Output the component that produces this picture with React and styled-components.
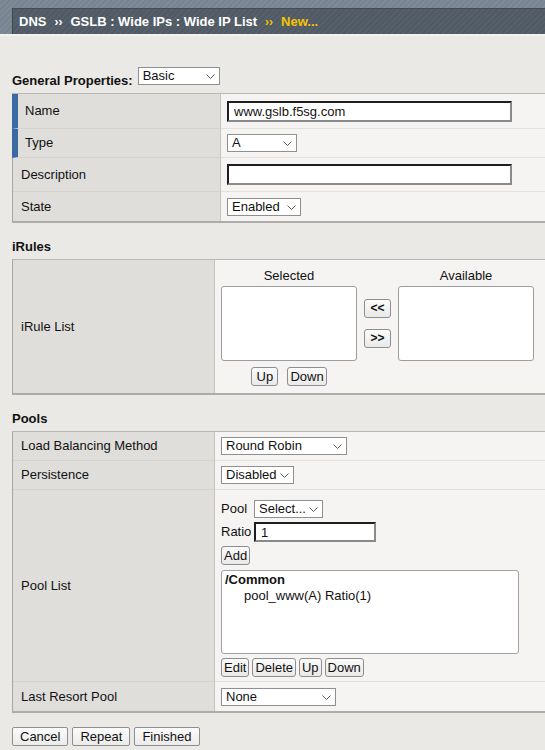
import React from "react"
import styled, { createGlobalStyle } from "styled-components"

const GlobalStyle = createGlobalStyle`
  * {
    box-sizing: border-box;
  }

  body {
    margin: 0;
    background: #eae9e5;
    font-family: "Liberation Sans", Arial, sans-serif;
    font-size: 13px;
    color: #111;
  }
`

const Chevron = () => (
  <svg width="9" height="5" viewBox="0 0 9 5">
    <polyline
      points="0.5,0.5 4.5,4.5 8.5,0.5"
      fill="none"
      stroke="#5a5a5a"
      strokeWidth="1"
    />
  </svg>
)

const Select = ({ w, children }) => (
  <SelectBox $w={w}>
    <span>{children}</span>
    <Chevron />
  </SelectBox>
)

const App = () => {
  return (
    <>
      <GlobalStyle />
      <Header>
        <Crumbs>
          <span>DNS</span>
          <Sep>››</Sep>
          <span>GSLB : Wide IPs : Wide IP List</span>
          <Sep $current>››</Sep>
          <Current>New...</Current>
        </Crumbs>
      </Header>

      <Form>
        <PropsLine>
          <PropsTitle>General Properties:</PropsTitle>
          <Select w={82}>Basic</Select>
        </PropsLine>

        <Table>
          <Row $h={35} $labelW={208}>
            <Label $required>Name</Label>
            <Value>
              <TextInput $w={285} defaultValue="www.gslb.f5sg.com" />
            </Value>
          </Row>
          <Row $h={29} $labelW={208}>
            <Label $required>Type</Label>
            <Value>
              <Select w={70}>A</Select>
            </Value>
          </Row>
          <Row $h={34} $labelW={208}>
            <Label>Description</Label>
            <Value>
              <TextInput $w={285} defaultValue="" />
            </Value>
          </Row>
          <Row $h={29} $labelW={208}>
            <Label>State</Label>
            <Value>
              <Select w={74}>Enabled</Select>
            </Value>
          </Row>
        </Table>

        <SectionTitle>iRules</SectionTitle>
        <Table>
          <Row $h={133} $labelW={202}>
            <Label>iRule List</Label>
            <Value $top={8}>
              <Swap>
                <ColHead>Selected</ColHead>
                <span />
                <ColHead>Available</ColHead>
                <ListBox />
                <ArrowCol>
                  <Button $w={27}>&lt;&lt;</Button>
                  <Button $w={27}>&gt;&gt;</Button>
                </ArrowCol>
                <ListBox />
                <OrderRow>
                  <Button $w={27}>Up</Button>
                  <Button>Down</Button>
                </OrderRow>
              </Swap>
            </Value>
          </Row>
        </Table>

        <SectionTitle>Pools</SectionTitle>
        <Table>
          <Row $h={29} $labelW={202}>
            <Label>Load Balancing Method</Label>
            <Value>
              <Select w={126}>Round Robin</Select>
            </Value>
          </Row>
          <Row $h={29} $labelW={202}>
            <Label>Persistence</Label>
            <Value>
              <Select w={73}>Disabled</Select>
            </Value>
          </Row>
          <Row $h={192} $labelW={202}>
            <Label>Pool List</Label>
            <Value $top={10}>
              <PoolForm>
                <PoolField>
                  <span>Pool</span>
                  <Select w={69}>Select...</Select>
                </PoolField>
                <PoolField>
                  <span>Ratio</span>
                  <TextInput $w={122} $h={20} defaultValue="1" />
                </PoolField>
                <div>
                  <Button>Add</Button>
                </div>
                <PoolBox>
                  <PoolGroup>/Common</PoolGroup>
                  <PoolItem>pool_www(A) Ratio(1)</PoolItem>
                </PoolBox>
                <ButtonRow>
                  <Button>Edit</Button>
                  <Button>Delete</Button>
                  <Button>Up</Button>
                  <Button>Down</Button>
                </ButtonRow>
              </PoolForm>
            </Value>
          </Row>
          <Row $h={29} $labelW={202}>
            <Label>Last Resort Pool</Label>
            <Value>
              <Select w={115}>None</Select>
            </Value>
          </Row>
        </Table>

        <Actions>
          <ActionButton>Cancel</ActionButton>
          <ActionButton>Repeat</ActionButton>
          <ActionButton>Finished</ActionButton>
        </Actions>
      </Form>
    </>
  )
}

const Header = styled.header`
  height: 36px;
  padding: 8px 0 0 12px;
  background: repeating-linear-gradient(
    135deg,
    #7e8a98 0 2px,
    #77838f 2px 4px
  );
  border-bottom: 2px solid #f4f3ef;
`

const Crumbs = styled.nav`
  display: flex;
  align-items: center;
  height: 26px;
  padding-left: 6px;
  background: repeating-linear-gradient(
    135deg,
    #56606b 0 2px,
    #505a65 2px 4px
  );
  border-top: 1px solid #434b55;
  border-left: 1px solid #3e464f;
  color: #fff;
  font-weight: bold;
  font-size: 13px;
`

const Sep = styled.span`
  margin: 0 8px;
  color: ${(p) => (p.$current ? "#f5c400" : "#fff")};
  font-size: 12px;
`

const Current = styled.span`
  color: #f5c400;
`

const Form = styled.main`
  padding: 31px 0 0 12px;
`

const PropsLine = styled.div`
  display: flex;
  align-items: flex-start;
  gap: 5px;
  margin-bottom: 4px;
`

const PropsTitle = styled.span`
  margin-top: 6px;
  font-weight: bold;
  line-height: 16px;
`

const SectionTitle = styled.h3`
  margin: 16px 0 4px;
  font-size: 13px;
  line-height: 16px;
  font-weight: bold;
`

const Table = styled.section`
  border-top: 1px solid #b9b8b5;
  border-bottom: 2px solid #adacaa;
  border-left: 1px solid #a8a7a4;
`

const Row = styled.div`
  display: grid;
  grid-template-columns: ${(p) => p.$labelW}px 1fr;
  height: ${(p) => p.$h}px;

  & > * {
    border-bottom: 1px solid #d4d3d0;
  }

  &:last-child > * {
    border-bottom: none;
  }
`

const Label = styled.div`
  display: flex;
  align-items: center;
  padding-left: ${(p) => (p.$required ? 7 : 8)}px;
  background: #dfdedb;
  border-right: 1px solid #c5c4c1;
  border-left: ${(p) => (p.$required ? "6px solid #3b69a1" : "none")};
  margin-left: ${(p) => (p.$required ? "-1px" : "0")};
  line-height: 16px;
`

const Value = styled.div`
  display: flex;
  align-items: ${(p) => (p.$top ? "flex-start" : "center")};
  padding: ${(p) => p.$top || 0}px 6px 0;
  background: #f5f4f2;
  border-bottom-color: #e2e1de !important;
`

const SelectBox = styled.div`
  display: inline-flex;
  align-items: center;
  justify-content: space-between;
  gap: 3px;
  width: ${(p) => p.$w}px;
  height: 18px;
  padding: 0 4px 0 4px;
  background: #fff;
  border: 1px solid #8f8f8f;
  font-size: 13px;
  line-height: 16px;
  color: #111;
  white-space: nowrap;

  svg {
    flex: none;
    margin-top: 1px;
  }
`

const TextInput = styled.input.attrs({ type: "text" })`
  width: ${(p) => p.$w}px;
  height: ${(p) => p.$h || 21}px;
  padding: 0 5px;
  border: 2px solid;
  border-color: #1e1e1e #8a8a8a #8a8a8a #1e1e1e;
  background: #fff;
  font-family: "Liberation Sans", Arial, sans-serif;
  font-size: 13px;
  color: #111;
  outline: none;
`

const Button = styled.button`
  height: 19px;
  min-width: ${(p) => (p.$w ? `${p.$w}px` : "0")};
  padding: 0 2px;
  border: 1px solid #8e8e8e;
  border-radius: 3px;
  background: linear-gradient(#fbfbfb, #e9e9e9);
  font-family: "Liberation Sans", Arial, sans-serif;
  font-size: 13px;
  line-height: 17px;
  color: #111;
`

const Swap = styled.div`
  display: grid;
  grid-template-columns: 136px 27px 136px;
  column-gap: 7px;
  row-gap: 2px;
`

const ColHead = styled.div`
  text-align: center;
  line-height: 16px;
`

const ListBox = styled.div`
  height: 75px;
  background: #fff;
  border: 1px solid #9d9d9d;
  border-radius: 3px;
`

const ArrowCol = styled.div`
  display: flex;
  flex-direction: column;
  justify-content: center;
  gap: 11px;

  button {
    font-size: 12px;
    font-weight: bold;
  }
`

const OrderRow = styled.div`
  display: flex;
  justify-content: center;
  gap: 9px;
  margin-top: 4px;
  width: 136px;
`

const PoolForm = styled.div`
  display: flex;
  flex-direction: column;
  gap: 4px;
`

const PoolField = styled.div`
  display: grid;
  grid-template-columns: 33px auto;
  align-items: center;
  justify-content: start;
  line-height: 16px;
`

const PoolBox = styled.div`
  width: 298px;
  height: 84px;
  margin-top: 1px;
  padding: 1px 3px;
  background: #fff;
  border: 1px solid #a3a3a3;
  border-radius: 3px;
  line-height: 16px;
`

const PoolGroup = styled.div`
  font-weight: bold;
`

const PoolItem = styled.div`
  padding-left: 19px;
`

const ButtonRow = styled.div`
  display: flex;
  gap: 3px;
`

const Actions = styled.div`
  display: flex;
  gap: 4px;
  margin-top: 14px;
`

const ActionButton = styled.button`
  height: 19px;
  padding: 0 7px;
  border: 1px solid #8e8e8e;
  border-radius: 2px;
  background: linear-gradient(#fbfbfb, #ebebeb);
  font-family: "Liberation Sans", Arial, sans-serif;
  font-size: 13px;
  line-height: 17px;
  color: #111;
`

export default App
